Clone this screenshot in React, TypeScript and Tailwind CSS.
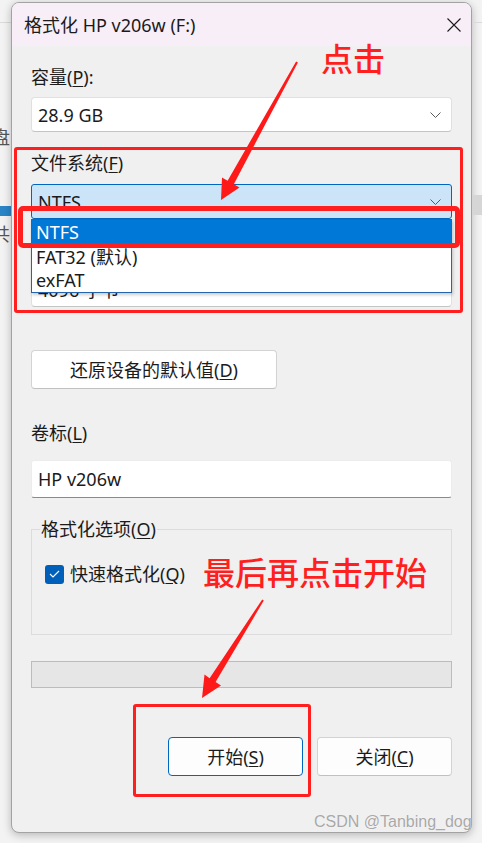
import React from "react";

// Windows 11 "format drive" dialog with red tutorial annotations on top.

const ui = "font-['Segoe_UI','Noto_Sans','Noto_Sans_CJK_SC',sans-serif]";
const cjkRed = "font-['Noto_Sans_CJK_SC',sans-serif] text-[#ff1f1f] text-[32px] leading-none font-medium";

function Chevron() {
  return (
    <svg width="11" height="6" viewBox="0 0 11 6" className="shrink-0">
      <polyline points="0.5,0.5 5.5,5.5 10.5,0.5" fill="none" stroke="#5a5a5a" strokeWidth="1" />
    </svg>
  );
}

function Label({ text, k, tail = "" }: { text: string; k: string; tail?: string }) {
  return (
    <div className="h-[24px] leading-[24px] text-[18px] text-[#1b1b1b]">
      {text}(<u className="underline-offset-2">{k}</u>){tail}
    </div>
  );
}

function Combo({ value, focused = false }: { value: string; focused?: boolean }) {
  return (
    <div
      className={
        focused
          ? "flex h-[35px] items-center justify-between rounded-[3px] border border-[#0067c0] bg-[#cce4f7] pl-[6px] pr-[10px]"
          : "flex h-[35px] items-center justify-between rounded-[4px] border border-[#e0e0e0] border-b-[#c4c4c4] bg-white pl-[6px] pr-[10px]"
      }
    >
      <span className="text-[18px] leading-[24px] text-[#1b1b1b]">{value}</span>
      <Chevron />
    </div>
  );
}

function Arrow({ points }: { points: string }) {
  return <polygon points={points} fill="#ff1a1a" />;
}

export default function App() {
  return (
    <div className={`relative flex h-[843px] w-[482px] overflow-hidden bg-[#f3f3f3] ${ui}`}>
      {/* desktop behind the dialog */}
      <div className="flex w-[11px] shrink-0 flex-col overflow-hidden border-t border-[#dadada] mt-[22px]">
        <div className="mt-[100px] ml-[-8px] text-[18px] leading-[28px] text-[#555]">盘</div>
        <div className="mt-[55px] h-[10px] w-full bg-[#2a85c6]" />
        <div className="mt-[5px] ml-[-8px] text-[18px] leading-[26px] text-[#555]">共</div>
      </div>

      <div className="mt-[2px] flex h-[831px] w-[461px] shrink-0 flex-col overflow-hidden rounded-[8px] border border-[#a3a3a3] bg-[#f0f0f0] shadow-[0_2px_8px_rgba(0,0,0,0.25)]">
        {/* title bar */}
        <div className="flex h-[43px] shrink-0 items-center justify-between bg-[#f8eef7] pl-[12px] pr-[9px]">
          <span className="text-[18px] leading-[24px] text-[#1b1b1b]">格式化 HP v206w (F:)</span>
          <svg width="14" height="14" viewBox="0 0 14 14" className="mr-[1px] mt-[1px]">
            <path d="M0.5 0.5 L13.5 13.5 M13.5 0.5 L0.5 13.5" stroke="#1b1b1b" strokeWidth="1.1" />
          </svg>
        </div>

        <div className="flex flex-col px-[19px]">
          <div className="mt-[19px]">
            <Label text="容量" k="P" tail=":" />
          </div>
          <div className="mt-[8px]">
            <Combo value="28.9 GB" />
          </div>

          <div className="mt-[19px]">
            <Label text="文件系统" k="F" />
          </div>
          <div className="relative mt-[9px]">
            <Combo value="NTFS" focused />
            <div className="absolute left-0 top-full z-10 flex w-full flex-col border border-[#2465ad] bg-white shadow-[1px_2px_3px_rgba(0,0,0,0.2)]">
              <div className="h-[25px] bg-[#0078d7] pl-[4px] text-[18px] leading-[25px] text-white">NTFS</div>
              <div className="h-[24px] pl-[4px] text-[18px] leading-[24px] text-[#1b1b1b]">FAT32 (默认)</div>
              <div className="h-[23px] pl-[4px] text-[18px] leading-[23px] text-[#1b1b1b]">exFAT</div>
            </div>
          </div>

          {/* allocation unit label sits under the open list */}
          <div className="mt-[19px] h-[24px]" />
          <div className="mt-[10px]">
            <Combo value="4096 字节" />
          </div>

          <button className="mt-[43px] h-[39px] w-[246px] rounded-[4px] border border-[#d3d3d3] border-b-[#c0c0c0] bg-white text-[18px] leading-[24px] text-[#1b1b1b]">
            还原设备的默认值(<u className="underline-offset-2">D</u>)
          </button>

          <div className="mt-[32px]">
            <Label text="卷标" k="L" />
          </div>
          <div className="mt-[15px] flex h-[38px] items-center rounded-[3px] border border-[#ececec] border-b-[#8a8a8a] bg-white pl-[6px]">
            <span className="text-[18px] leading-[24px] text-[#1b1b1b]">HP v206w</span>
          </div>

          {/* format options group */}
          <div className="mt-[31px] flex h-[106px] flex-col border border-[#dcdcdc]">
            <div className="-mt-[13px] ml-[8px] self-start bg-[#f0f0f0] px-[1px]">
              <Label text="格式化选项" k="O" />
            </div>
            <div className="mt-[21px] ml-[13px] flex items-center gap-[6px]">
              <div className="flex h-[19px] w-[19px] items-center justify-center rounded-[3px] bg-[#005fb8]">
                <svg width="11" height="8" viewBox="0 0 11 8">
                  <polyline points="1,4 4,7 10,1" fill="none" stroke="white" strokeWidth="1.1" />
                </svg>
              </div>
              <Label text="快速格式化" k="Q" />
            </div>
          </div>

          <div className="mt-[26px] h-[27px] border border-[#bcbcbc] bg-[#e6e6e6]" />

          <div className="mt-[49px] flex justify-end gap-[14px]">
            <button className="h-[39px] w-[135px] rounded-[4px] border border-[#0067c0] bg-[#fdfdfd] text-[18px] leading-[24px] text-[#1b1b1b]">
              开始(<u className="underline-offset-2">S</u>)
            </button>
            <button className="h-[39px] w-[135px] rounded-[4px] border border-[#d3d3d3] border-b-[#c0c0c0] bg-[#fdfdfd] text-[18px] leading-[24px] text-[#1b1b1b]">
              关闭(<u className="underline-offset-2">C</u>)
            </button>
          </div>
        </div>
      </div>

      <div className="flex w-[10px] shrink-0 flex-col">
        <div className="mt-[22px] h-px bg-[#dadada]" />
        <div className="mt-[172px] h-[20px] bg-[#d6d6d6]" />
      </div>

      {/* tutorial annotations */}
      <div className="absolute left-[14px] top-[147px] h-[166px] w-[449px] rounded-[3px] border-[3px] border-[#ff1f1f]" />
      <div className="absolute left-[18px] top-[206px] z-20 h-[42px] w-[442px] rounded-[5px] border-[5px] border-[#ff1f1f]" />
      <div className="absolute left-[133px] top-[704px] h-[93px] w-[178px] rounded-[3px] border-[3px] border-[#ff1f1f]" />

      <svg className="absolute left-0 top-0 z-30" width="482" height="843" viewBox="0 0 482 843">
        <Arrow points="296.1,61.5 297.9,62.5 233.8,184.2 239.5,187.5 221,200 222,177.5 227.6,180.8" />
        <Arrow points="262.2,599.5 263.8,600.5 215.6,682 221,685.5 202,698 204.5,674.5 209.6,678.2" />
      </svg>

      <div className={`absolute left-[321px] top-[41px] ${cjkRed}`}>点击</div>
      <div className={`absolute left-[203px] top-[555px] ${cjkRed}`}>最后再点击开始</div>

      <div className="absolute left-[314px] top-[812px] font-['Liberation_Sans',sans-serif] text-[16px] leading-[20px] text-[#a8a8a8] [text-shadow:0_0_1px_#ffffff]">
        CSDN @Tanbing_dog
      </div>
    </div>
  );
}
